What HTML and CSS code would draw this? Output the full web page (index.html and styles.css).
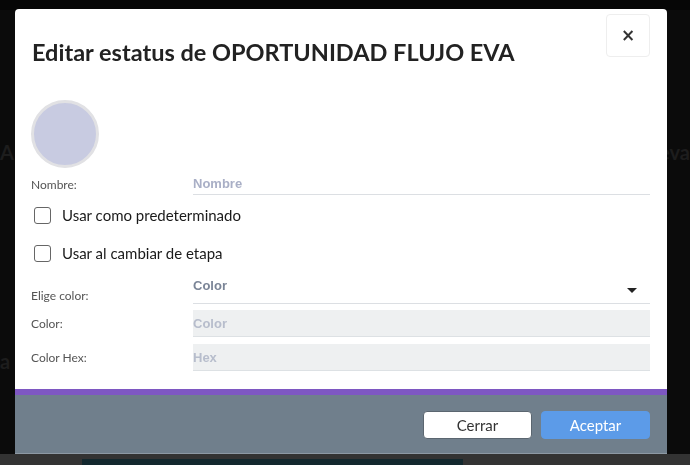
FILE: index.html
```html
<!DOCTYPE html>
<html lang="es">
<head>
  <meta charset="UTF-8" />
  <meta name="viewport" content="width=device-width, initial-scale=1.0" />
  <title>Editar estatus</title>
  <link rel="stylesheet" href="styles.css">
</head>
<body>
  <div class="page">
    <div class="page-top"></div>
    <div class="page-row page-row-first"><span>AI</span><span>eva</span></div>
    <div class="page-row page-row-second"><span>a (</span></div>
    <div class="page-bottom"><div class="page-bottom-block"></div></div>
  </div>

  <div class="modal">
    <div class="modal-body">
      <div class="modal-header">
        <h2>Editar estatus de OPORTUNIDAD FLUJO EVA</h2>
        <button class="close" type="button">&times;</button>
      </div>

      <div class="avatar"></div>

      <div class="row row-name">
        <label>Nombre:</label>
        <input class="line" type="text" placeholder="Nombre">
      </div>

      <label class="check"><input type="checkbox"><span>Usar como predeterminado</span></label>
      <label class="check"><input type="checkbox"><span>Usar al cambiar de etapa</span></label>

      <div class="row row-select">
        <label>Elige color:</label>
        <div class="select"><span>Color</span><i class="caret"></i></div>
      </div>

      <div class="row row-field">
        <label>Color:</label>
        <input class="filled" type="text" placeholder="Color">
      </div>

      <div class="row row-field">
        <label>Color Hex:</label>
        <input class="filled" type="text" placeholder="Hex">
      </div>
    </div>

    <div class="modal-footer">
      <button class="btn btn-close" type="button">Cerrar</button>
      <button class="btn btn-ok" type="button">Aceptar</button>
    </div>
  </div>
</body>
</html>
```

FILE: styles.css
```css
* { box-sizing: border-box; }
body {
  margin: 0;
  background: #0b0b0b;
  font-family: Lato, "Noto Sans", sans-serif;
  overflow: hidden;
}
.page {
  height: 465px;
  display: flex;
  flex-direction: column;
}
.page-top {
  height: 10px;
  background: #060606;
}
.page-row {
  display: flex;
  justify-content: space-between;
  color: #1d1d1d;
  font-size: 20px;
  font-weight: bold;
}
.page-row-first { margin-top: 130px; }
.page-row-second { margin-top: 185px; }
.page-bottom {
  margin-top: auto;
  height: 11px;
  background: #333;
  padding: 5px 0 0 82px;
}
.page-bottom-block {
  width: 381px;
  height: 6px;
  background: #13282e;
}

.modal {
  position: fixed;
  left: 15px;
  top: 9px;
  width: 652px;
  border-radius: 4px 4px 0 0;
  overflow: hidden;
  background: #fff;
}
.modal-body {
  padding: 5px 17px 18px 16px;
  border-bottom: 6px solid #7e57c2;
}
.modal-header {
  display: flex;
  justify-content: space-between;
  align-items: flex-start;
}
.modal-header h2 {
  margin: 23px 0 0 1px;
  font-size: 23.5px;
  line-height: 30px;
  font-weight: bold;
  color: #222;
}
.close {
  width: 44px;
  height: 43px;
  background: #fff;
  border: 1px solid #eee;
  border-radius: 4px;
  font-size: 17px;
  font-weight: bold;
  color: #333;
  line-height: 1;
  padding: 0;
  font-family: "DejaVu Sans", sans-serif;
}
.avatar {
  margin-top: 33px;
  width: 68px;
  height: 68px;
  border-radius: 50%;
  background: #c8cbe1;
  border: 3px solid #e1e1e4;
}
.row {
  display: flex;
  align-items: center;
}
.row label {
  width: 162px;
  flex: none;
  font-size: 12px;
  color: #555;
}
.row-name { margin-top: 5px; height: 22px; }
.row-name label { align-self: flex-end; padding-bottom: 3px; }
.line {
  flex: 1;
  height: 22px;
  border: 0;
  border-bottom: 1px solid #dcdfe3;
  padding: 0;
  font-family: "Liberation Sans", Arial, sans-serif;
  font-size: 13px;
  font-weight: bold;
  outline: none;
}
.line::placeholder { color: #a9afc6; }
.check {
  display: flex;
  align-items: center;
  margin: 11px 0 0 3px;
  font-size: 15px;
  color: #1a1a1a;
}
.check + .check { margin-top: 20px; }
.check input {
  appearance: none;
  width: 17px;
  height: 17px;
  margin: 0 11px 0 0;
  border: 1px solid #666;
  border-radius: 3px;
  background: #fff;
}
.row-select { margin-top: 14px; height: 28px; }
.row-select label { padding-top: 10px; }
.select {
  flex: 1;
  height: 28px;
  display: flex;
  justify-content: space-between;
  padding-top: 2px;
  border-bottom: 1px solid #dcdfe3;
  font-family: "Liberation Sans", Arial, sans-serif;
  font-size: 13px;
  font-weight: bold;
  color: #7b8597;
}
.caret {
  margin: 10px 13px 0 0;
  width: 0;
  height: 0;
  border-left: 5px solid transparent;
  border-right: 5px solid transparent;
  border-top: 5px solid #222;
}
.row-field { margin-top: 6px; }
.row-field + .row-field { margin-top: 7px; }
.filled {
  flex: 1;
  height: 27px;
  border: 0;
  border-bottom: 1px solid #dde1e4;
  background: #eef0f1;
  padding: 0;
  font-family: "Liberation Sans", Arial, sans-serif;
  font-size: 13px;
  font-weight: bold;
  outline: none;
}
.filled::placeholder { color: #b7bdcc; }

.modal-footer {
  height: 59px;
  background: #707f8c;
  border-bottom: 1px solid #8d99a4;
  display: flex;
  justify-content: flex-end;
  align-items: flex-start;
  gap: 9px;
  padding: 16px 17px 0 0;
}
.btn {
  width: 109px;
  height: 28px;
  border-radius: 4px;
  font-family: Lato, "Noto Sans", sans-serif;
  font-size: 15px;
  padding: 0;
}
.btn-close {
  background: #fff;
  border: 1px solid #5b6670;
  color: #333;
}
.btn-ok {
  background: #5c9be8;
  border: 1px solid #5c9be8;
  color: #fff;
}
```
